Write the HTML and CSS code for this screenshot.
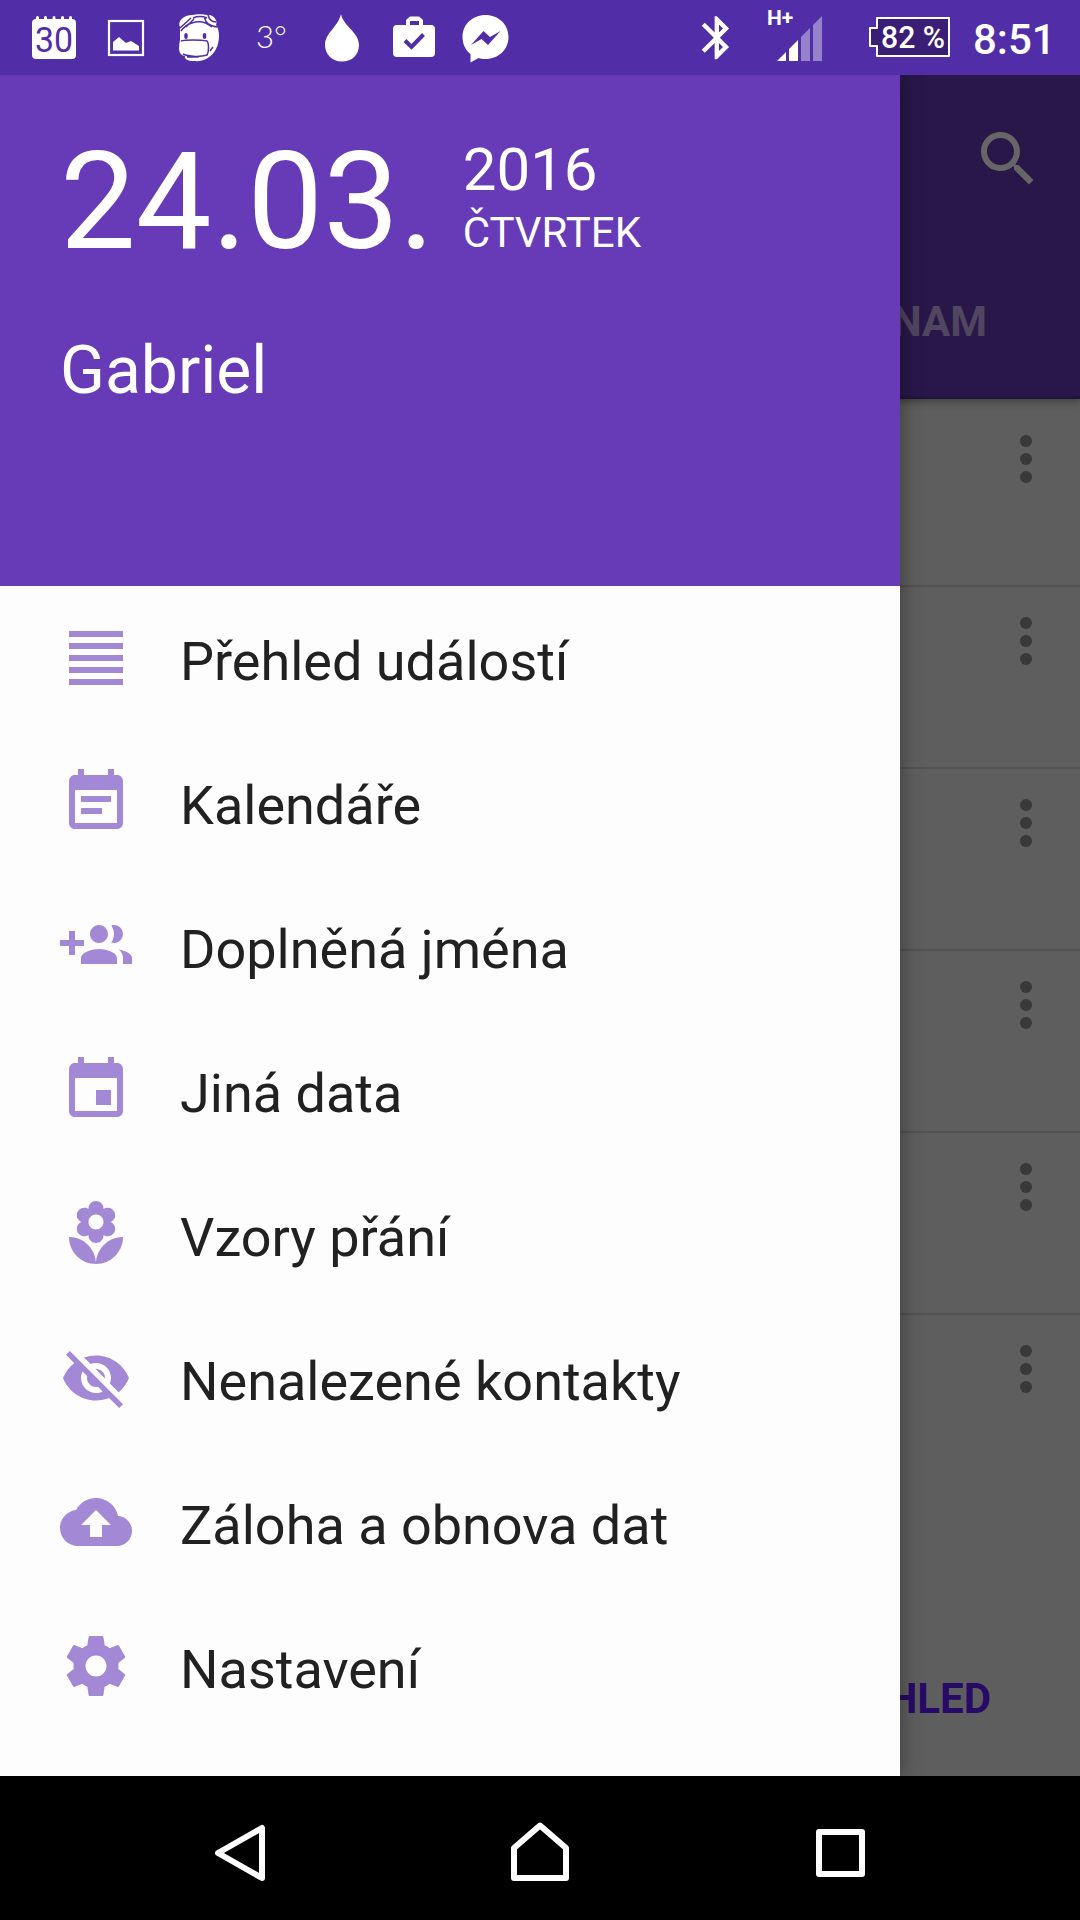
FILE: index.html
```html
<!DOCTYPE html>
<html lang="cs">
<head>
    <meta charset="UTF-8">
    <meta name="viewport" content="width=device-width, initial-scale=1.0">
    <title>Kalendář</title>
    <link rel="stylesheet" href="styles.css">
</head>
<body>
    <div class="status-bar">
        <div class="notifications">
            <svg width="92" height="75" viewBox="0 0 92 75">
                <path fill="#fff" d="M36 19v-1.500a1.500 1.500 0 0 1 3 0V19h5v-1.500a1.500 1.500 0 0 1 3 0V19h5.500v-1.500a1.500 1.500 0 0 1 3 0V19H61v-1.500a1.500 1.500 0 0 1 3 0V19h5v-1.500a1.500 1.500 0 0 1 3 0V19a4 4 0 0 1 4 4v32a4 4 0 0 1-4 4H36a4 4 0 0 1-4-4V23a4 4 0 0 1 4-4z"/>
                <text class="day-number" x="35" y="52" textLength="38" lengthAdjust="spacingAndGlyphs">30</text>
            </svg>
            <svg width="68" height="75" viewBox="92 0 68 75">
                <rect x="109" y="21" width="34" height="34" fill="none" stroke="#fff" stroke-width="2.200"/>
                <path fill="#fff" d="M113 50.500V42l6-5 7 6 5-2 8 5v4.500z"/>
            </svg>
            <svg width="80" height="75" viewBox="160 0 80 75">
                <path fill="#fff" d="M180 27c-3-6 4-12 12-12 4-1 11-1 15 0 7-1 11 6 9 10 4 5 4 16 0 24-4 8-12 13-22 12-6 0-10-2-9-5-6-1-7-6-5-16z"/>
                <g fill="none" stroke="#512da8" stroke-width="1.500">
                    <path d="M180 28l11-10M186 27l8-8M193 18c5-2 9-2 14 0M204 17c2 6 5 9 13 10M208 15c1 4 4 7 8 7M192 23c-4 1-8 4-11 8M192 23c8-3 14-1 20 4"/>
                    <path d="M181 41c4-1.500 20-1.500 26 0 2 2 2 11 0 14-6 2-18 2-24-1M187 57h12M213 47l-3 4"/>
                </g>
                <ellipse cx="186" cy="36" rx="1.800" ry="3" fill="#512da8"/>
                <ellipse cx="204.500" cy="36" rx="1.800" ry="3" fill="#512da8"/>
            </svg>
            <span class="temperature">3°</span>
            <svg width="76" height="75" viewBox="300 0 76 75">
                <path fill="#fff" d="M341 14c2 12 18 18 18 31 0 10-7 16.500-17 16.500S325 54 325 45c0-12 13-18 16-31z"/>
            </svg>
            <svg width="72" height="75" viewBox="376 0 72 75">
                <path fill="#fff" fill-rule="evenodd" d="M406 25v-5l4-3.500h9l4 3.500v5h8a4 4 0 0 1 4 4v24a4 4 0 0 1-4 4h-34a4 4 0 0 1-4-4V29a4 4 0 0 1 4-4zm4 0h9v-4h-9z"/>
                <path fill="none" stroke="#512da8" stroke-width="4" d="M405 40.500l6.500 6.500L423.500 34.500"/>
            </svg>
            <svg width="72" height="75" viewBox="448 0 72 75">
                <path fill="#fff" d="M485.500 15c13 0 23 9.500 23 22s-10 22-23 22c-3 0-5-.4-7-1l-8 4.500V54c-5-4-8-10-8-17 0-12.500 10-22 23-22z"/>
                <path fill="#512da8" d="M471 45l12.500-14 6.500 6 10.500-6L488 45l-6.500-6z"/>
            </svg>
        </div>
        <div class="system">
            <svg width="51.600" height="51.600" viewBox="0 0 24 24">
                <path fill="#fff" d="M17.710 7.710L12 2h-1v7.590L6.410 5 5 6.410 10.590 12 5 17.590 6.410 19 11 14.410V22h1l5.710-5.710-4.300-4.290 4.300-4.290zM13 5.830l1.880 1.880L13 9.590V5.830zm1.880 10.460L13 18.170v-3.760l1.880 1.880z"/>
            </svg>
            <svg class="signal" width="70" height="75" viewBox="762 0 70 75">
                <text class="network" x="767" y="25">H+</text>
                <path fill="#fff" d="M777 61l9-9v9zM789 61V49l9-9v21z"/>
                <path fill="#fff" opacity=".4" d="M801 61V37l9-9v33zM813 61V25l9-9v45z"/>
            </svg>
            <svg class="battery" width="84" height="75" viewBox="868 0 84 75">
                <path fill="#3a1d75" stroke="#fff" stroke-width="2" stroke-linejoin="round" d="M877 18h72v38h-72V46h-7V28h7z"/>
                <text class="percent" x="881" y="48" textLength="64" lengthAdjust="spacingAndGlyphs">82 %</text>
            </svg>
            <span class="clock">8:51</span>
        </div>
    </div>

    <div class="content">
        <div class="page">
            <div class="app-bar">
                <svg class="search" width="72" height="72" viewBox="0 0 24 24">
                    <path d="M15.500 14h-.79l-.28-.27C15.410 12.590 16 11.110 16 9.500 16 5.910 13.090 3 9.500 3S3 5.910 3 9.500 5.910 16 9.500 16c1.610 0 3.090-.59 4.230-1.570l.27.28v.79l5 4.990L20.490 19l-4.990-5zm-6 0C7.010 14 5 11.990 5 9.500S7.010 5 9.500 5 14 7.010 14 9.500 11.990 14 9.500 14z"/>
                </svg>
                <div class="tab">SEZNAM</div>
            </div>
            <div class="events">
                <div class="event"><i></i><i></i><i></i></div>
                <div class="event"><i></i><i></i><i></i></div>
                <div class="event"><i></i><i></i><i></i></div>
                <div class="event"><i></i><i></i><i></i></div>
                <div class="event"><i></i><i></i><i></i></div>
                <div class="event"><i></i><i></i><i></i></div>
            </div>
            <div class="overview">PŘEHLED</div>
        </div>

        <div class="drawer">
            <div class="drawer-header">
                <div class="date">
                    <span class="day">24.03.</span>
                    <div class="date-side">
                        <span class="year">2016</span>
                        <span class="weekday">ČTVRTEK</span>
                    </div>
                </div>
                <div class="name-day">Gabriel</div>
            </div>
            <ul class="menu">
                <li>
                    <svg viewBox="0 0 24 24"><path d="M3 3h18v2H3zM3 7h18v2H3zM3 11h18v2H3zM3 15h18v2H3zM3 19h18v2H3z"/></svg>
                    <span>Přehled událostí</span>
                </li>
                <li>
                    <svg viewBox="0 0 24 24"><path d="M17 10H7v2h10v-2zm2-7h-1V1h-2v2H8V1H6v2H5c-1.110 0-1.990.9-1.990 2L3 19c0 1.100.89 2 2 2h14c1.100 0 2-.9 2-2V5c0-1.100-.9-2-2-2zm0 16H5V8h14v11zm-5-5H7v2h7v-2z"/></svg>
                    <span>Kalendáře</span>
                </li>
                <li>
                    <svg viewBox="0 0 24 24"><path d="M8 10H5V7H3v3H0v2h3v3h2v-3h3v-2zm10 1c1.660 0 2.990-1.340 2.990-3S19.660 5 18 5c-.32 0-.63.05-.91.14.57.81.9 1.790.9 2.860s-.34 2.040-.9 2.860c.28.09.59.14.91.14zm-5 0c1.660 0 2.990-1.340 2.990-3S14.660 5 13 5c-1.660 0-3 1.340-3 3s1.340 3 3 3zm6.620 2.160c.83.73 1.380 1.660 1.380 2.840v2h3v-2c0-1.540-2.370-2.490-4.380-2.840zM13 13c-2 0-6 1-6 3v2h12v-2c0-2-4-3-6-3z"/></svg>
                    <span>Doplněná jména</span>
                </li>
                <li>
                    <svg viewBox="0 0 24 24"><path d="M17 12h-5v5h5v-5zM16 1v2H8V1H6v2H5c-1.110 0-1.990.9-1.990 2L3 19c0 1.100.89 2 2 2h14c1.100 0 2-.9 2-2V5c0-1.100-.9-2-2-2h-1V1h-2zm3 18H5V8h14v11z"/></svg>
                    <span>Jiná data</span>
                </li>
                <li>
                    <svg viewBox="0 0 24 24"><path d="M3 13c0 4.970 4.030 9 9 9 0-4.970-4.030-9-9-9zm9 9c4.970 0 9-4.030 9-9-4.970 0-9 4.030-9 9zM12 5.500c1.380 0 2.500 1.120 2.500 2.500s-1.120 2.500-2.500 2.500S9.500 9.380 9.500 8s1.120-2.500 2.500-2.500zm-6.400 4.750c0 1.380 1.120 2.500 2.500 2.500.53 0 1.010-.16 1.420-.44l-.02.19c0 1.380 1.120 2.500 2.500 2.500s2.500-1.120 2.500-2.500l-.02-.19c.4.28.89.44 1.420.44 1.380 0 2.500-1.120 2.500-2.500 0-1-.59-1.850-1.430-2.250.84-.4 1.430-1.250 1.430-2.250 0-1.380-1.120-2.500-2.500-2.500-.53 0-1.010.16-1.420.44l.02-.19C14.500 2.120 13.380 1 12 1S9.500 2.120 9.500 3.500l.02.19c-.4-.28-.89-.44-1.420-.44-1.380 0-2.500 1.120-2.500 2.500 0 1 .59 1.850 1.430 2.250-.84.4-1.430 1.250-1.430 2.250z"/></svg>
                    <span>Vzory přání</span>
                </li>
                <li>
                    <svg viewBox="0 0 24 24"><path d="M12 7c2.760 0 5 2.240 5 5 0 .65-.13 1.260-.36 1.830l2.920 2.920c1.510-1.260 2.700-2.890 3.430-4.750-1.730-4.390-6-7.500-11-7.500-1.400 0-2.740.25-3.980.7l2.160 2.160C10.740 7.130 11.350 7 12 7zM2 4.270l2.280 2.280.46.46C3.080 8.300 1.780 10.020 1 12c1.730 4.390 6 7.500 11 7.500 1.550 0 3.030-.3 4.380-.84l.42.42L19.730 22 21 20.730 3.270 3 2 4.270zM7.530 9.800l1.550 1.550c-.05.21-.08.43-.08.65 0 1.660 1.340 3 3 3 .22 0 .44-.03.65-.08l1.550 1.550c-.67.33-1.410.53-2.200.53-2.760 0-5-2.240-5-5 0-.79.2-1.530.53-2.200zm4.310-.78l3.150 3.150.02-.16c0-1.660-1.340-3-3-3l-.17.01z"/></svg>
                    <span>Nenalezené kontakty</span>
                </li>
                <li>
                    <svg viewBox="0 0 24 24"><path d="M19.350 10.040C18.670 6.590 15.640 4 12 4 9.110 4 6.600 5.640 5.350 8.040 2.340 8.360 0 10.910 0 14c0 3.310 2.690 6 6 6h13c2.760 0 5-2.240 5-5 0-2.640-2.050-4.780-4.650-4.960zM14 13v4h-4v-4H7l5-5 5 5h-3z"/></svg>
                    <span>Záloha a obnova dat</span>
                </li>
                <li>
                    <svg viewBox="0 0 24 24"><path d="M19.430 12.980c.04-.32.07-.64.07-.98s-.03-.66-.07-.98l2.110-1.650c.19-.15.24-.42.12-.64l-2-3.460c-.12-.22-.39-.3-.61-.22l-2.490 1c-.52-.4-1.080-.73-1.690-.98l-.38-2.650C14.460 2.180 14.250 2 14 2h-4c-.25 0-.46.18-.49.42l-.38 2.650c-.61.25-1.170.59-1.690.98l-2.490-1c-.23-.09-.49 0-.61.22l-2 3.460c-.13.22-.07.49.12.64l2.110 1.650c-.04.32-.07.65-.07.98s.03.66.07.98l-2.110 1.650c-.19.15-.24.42-.12.64l2 3.460c.12.22.39.3.61.22l2.490-1c.52.4 1.080.73 1.690.98l.38 2.650c.03.24.24.42.49.42h4c.25 0 .46-.18.49-.42l.38-2.650c.61-.25 1.170-.59 1.690-.98l2.490 1c.23.09.49 0 .61-.22l2-3.460c.12-.22.07-.49-.12-.64l-2.110-1.650zM12 15.500c-1.930 0-3.500-1.570-3.500-3.500s1.570-3.500 3.500-3.500 3.500 1.570 3.500 3.500-1.570 3.500-3.500 3.500z"/></svg>
                    <span>Nastavení</span>
                </li>
            </ul>
        </div>
    </div>

    <div class="nav-bar">
        <svg width="60" height="72" viewBox="0 0 60 72"><path d="M52 16v50L8 41z"/></svg>
        <svg width="60" height="72" viewBox="0 0 60 72"><path d="M4 66V36L30 13.500 56 36v30z"/></svg>
        <svg width="60" height="72" viewBox="0 0 60 72"><path d="M9 20h43v42H9z"/></svg>
    </div>
</body>
</html>
```
FILE: styles.css
```css
* {
    box-sizing: border-box;
}
body {
    margin: 0;
    width: 1080px;
    height: 1920px;
    overflow: hidden;
    display: flex;
    flex-direction: column;
    font-family: Roboto, sans-serif;
    background-color: #000;
}
svg {
    display: block;
    flex-shrink: 0;
}

/* status bar */
.status-bar {
    height: 75px;
    display: flex;
    justify-content: space-between;
    background-color: #512da8;
    color: #fff;
}
.notifications {
    display: flex;
    align-items: center;
}
.day-number {
    font-size: 35px;
    fill: #512da8;
}
.temperature {
    width: 60px;
    padding: 0 0 4px 16px;
    font-family: Lato, sans-serif;
    font-size: 31px;
    font-weight: 300;
}
.system {
    display: flex;
    align-items: center;
    padding-right: 27px;
}
.signal {
    margin-left: 19px;
}
.network {
    font-size: 21px;
    font-weight: 700;
    fill: #fff;
}
.battery {
    margin-left: 36px;
}
.percent {
    font-size: 32px;
    font-weight: 500;
    fill: #fff;
}
.clock {
    width: 80px;
    margin-left: 21px;
    padding-top: 3px;
    font-size: 42px;
    font-weight: 500;
}

/* dimmed page under the drawer */
.content {
    position: relative;
    height: 1701px;
    overflow: hidden;
}
.page {
    height: 100%;
    display: flex;
    flex-direction: column;
    background-color: #5e5e5e;
}
.app-bar {
    height: 324px;
    display: flex;
    flex-direction: column;
    align-items: flex-end;
    background-color: #291749;
    border-bottom: 3px solid #23133f;
    box-shadow: 0 2px 8px rgba(0, 0, 0, 0.4);
}
.search {
    margin: 48px 36px 0 0;
    fill: #666;
}
.tab {
    margin: 102px 93px 0 0;
    font-size: 42px;
    line-height: 50px;
    font-weight: 700;
    color: #50465f;
}
.events {
    flex: 1;
    padding-top: 6px;
}
.event {
    height: 182px;
    padding: 30px 48px 0 0;
    display: flex;
    flex-direction: column;
    align-items: flex-end;
    gap: 6px;
    border-bottom: 2px solid #525252;
}
.event:last-child {
    border-bottom: none;
}
.event i {
    width: 12px;
    height: 12px;
    border-radius: 50%;
    background-color: #393939;
}
.overview {
    margin: 0 89px 52px 0;
    text-align: right;
    font-size: 42px;
    line-height: 50px;
    font-weight: 700;
    color: #270a66;
}

/* drawer */
.drawer {
    position: absolute;
    top: 0;
    left: 0;
    width: 900px;
    height: 100%;
    background-color: #fdfdfd;
    box-shadow: 0 0 20px rgba(0, 0, 0, 0.4);
}
.drawer-header {
    height: 511px;
    padding: 48px 60px 0;
    background-color: #673ab7;
    color: #fff;
}
.date {
    display: flex;
    align-items: flex-start;
}
.day {
    font-size: 135px;
    line-height: 158px;
}
.date-side {
    display: flex;
    flex-direction: column;
    margin: 12px 0 0 28px;
}
.year {
    font-size: 60px;
    line-height: 70px;
}
.weekday {
    margin-top: 3px;
    font-size: 42px;
    line-height: 50px;
}
.name-day {
    margin-top: 51px;
    font-size: 66px;
    line-height: 78px;
}
.menu {
    margin: 0;
    padding: 0;
    list-style: none;
}
.menu li {
    height: 144px;
    padding: 0 60px;
    display: flex;
    align-items: center;
    gap: 48px;
    font-size: 54px;
    color: #212121;
}
.menu svg {
    width: 72px;
    height: 72px;
    fill: #a388d6;
}
.menu span {
    padding-top: 7px;
}

/* system navigation */
.nav-bar {
    height: 144px;
    padding: 0 210px;
    display: flex;
    align-items: center;
    justify-content: space-between;
    background-color: #000;
}
.nav-bar svg {
    fill: none;
    stroke: #fff;
    stroke-width: 6;
    stroke-linejoin: round;
}
```
